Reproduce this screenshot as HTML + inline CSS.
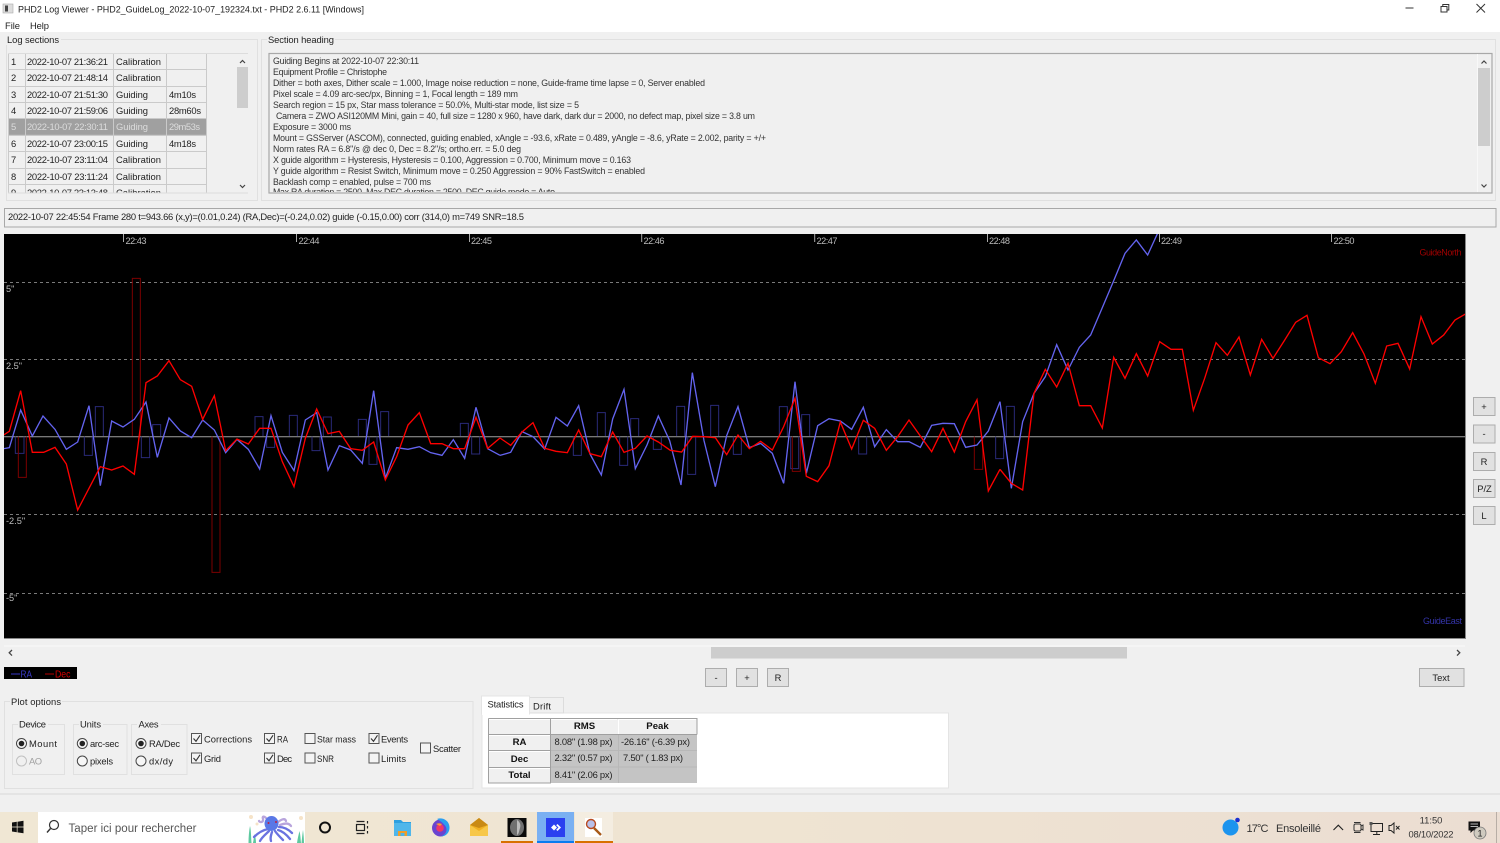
<!DOCTYPE html>
<html><head><meta charset="utf-8"><title>PHD2 Log Viewer</title>
<style>
html,body{margin:0;padding:0;background:#f0f0f0;overflow:hidden}
svg{display:block;filter:blur(.3px)}
text{font-family:"Liberation Sans",sans-serif;font-size:9.4px;fill:#222}
.s{font-size:8.8px;fill:#333}
.g{fill:#bbb;font-size:9.2px}
.w{fill:#dcdcdc}
.b{font-weight:bold;font-size:9.6px;fill:#111}
.btn{fill:#e1e1e1;stroke:#adadad;stroke-width:1}
.gb{fill:none;stroke:#e0e0e0;stroke-width:1}
.cb{fill:#f4f4f4;stroke:#555;stroke-width:1}
.ck{fill:none;stroke:#333;stroke-width:1.1}
.tb{font-size:11px;fill:#333}
</style></head><body>
<svg width="1500" height="843" viewBox="0 0 1500 843" xmlns="http://www.w3.org/2000/svg">
<defs>
<clipPath id="plot"><rect x="4" y="234" width="1461" height="404"/></clipPath>
<clipPath id="list"><rect x="8" y="53" width="228" height="140"/></clipPath>
<clipPath id="head"><rect x="269" y="54" width="1208" height="138"/></clipPath>
<clipPath id="oct"><rect x="247" y="812" width="58" height="31"/></clipPath>
<linearGradient id="tbg" x1="0" x2="1" y1="0" y2="0"><stop offset="0" stop-color="#f0e7d4"/><stop offset=".5" stop-color="#efe4d2"/><stop offset="1" stop-color="#ebddd2"/></linearGradient>
</defs>
<rect width="1500" height="843" fill="#f0f0f0"/>
<rect width="1500" height="32" fill="#fff"/>

<!-- Title bar -->
<rect x="3" y="4" width="10" height="9" fill="#ddd" stroke="#aaa" stroke-width=".6"/><rect x="5" y="5.500" width="3" height="6" fill="#444"/>
<text x="18" y="12.500" textLength="346" lengthAdjust="spacingAndGlyphs">PHD2 Log Viewer - PHD2_GuideLog_2022-10-07_192324.txt - PHD2 2.6.11 [Windows]</text>
<text x="5" y="29" textLength="15">File</text><text x="30" y="29" textLength="19">Help</text>
<path d="M1405.500 8h8M1476.500 4l8.500 8.500M1485 4l-8.500 8.500" stroke="#333" stroke-width="1" fill="none"/>
<path d="M1441 6.500h6v5.500h-6zM1442.800 6.500v-2h6v5.500h-1.800" stroke="#333" stroke-width="1" fill="none"/>

<!-- Log sections -->
<rect class="gb" x="6.500" y="39.500" width="251" height="161"/>
<rect x="6" y="35" width="55" height="10" fill="#f0f0f0"/>
<text x="7" y="43" textLength="52">Log sections</text>
<g clip-path="url(#list)">
<rect x="8" y="53" width="228" height="140" fill="#f0f0f0"/>
<rect x="8" y="118.500" width="198" height="16.400" fill="#a0a0a0"/>
<path d="M8.500 53v140M25.500 53v140M113.500 53v140M166.500 53v140M206.500 53v140M8 53.500h198M8 69.500h198M8 86.500h198M8 102.500h198M8 118.500h198M8 135.500h198M8 151.500h198M8 168.500h198M8 184.500h198" stroke="#cacaca" stroke-width="1" fill="none"/>
<g>
<text x="11" y="65">1</text><text x="27" y="65" textLength="81">2022-10-07 21:36:21</text><text x="116" y="65" textLength="45">Calibration</text>
<text x="11" y="81">2</text><text x="27" y="81" textLength="81">2022-10-07 21:48:14</text><text x="116" y="81" textLength="45">Calibration</text>
<text x="11" y="98">3</text><text x="27" y="98" textLength="81">2022-10-07 21:51:30</text><text x="116" y="98" textLength="32">Guiding</text><text x="169" y="98" textLength="27">4m10s</text>
<text x="11" y="114">4</text><text x="27" y="114" textLength="81">2022-10-07 21:59:06</text><text x="116" y="114" textLength="32">Guiding</text><text x="169" y="114" textLength="32">28m60s</text>
<text class="w" x="11" y="130">5</text><text class="w" x="27" y="130" textLength="81">2022-10-07 22:30:11</text><text class="w" x="116" y="130" textLength="32">Guiding</text><text class="w" x="169" y="130" textLength="31">29m53s</text>
<text x="11" y="147">6</text><text x="27" y="147" textLength="81">2022-10-07 23:00:15</text><text x="116" y="147" textLength="32">Guiding</text><text x="169" y="147" textLength="27">4m18s</text>
<text x="11" y="163">7</text><text x="27" y="163" textLength="81">2022-10-07 23:11:04</text><text x="116" y="163" textLength="45">Calibration</text>
<text x="11" y="180">8</text><text x="27" y="180" textLength="81">2022-10-07 23:11:24</text><text x="116" y="180" textLength="45">Calibration</text>
<text x="11" y="196">9</text><text x="27" y="196" textLength="81">2022-10-07 23:13:48</text><text x="116" y="196" textLength="45">Calibration</text>
</g></g>
<path d="M8 53.500h240M8 193h240" stroke="#dcdcdc" fill="none"/>
<rect x="237" y="67" width="11" height="41" fill="#cdcdcd"/>
<path d="M240 63l2.500-2.500 2.500 2.500M240 185l2.500 2.500 2.500-2.500" stroke="#444" stroke-width="1.200" fill="none"/>

<!-- Section heading -->
<rect class="gb" x="261.500" y="39.500" width="1234" height="161"/>
<rect x="267" y="35" width="68" height="10" fill="#f0f0f0"/>
<text x="268" y="43" textLength="66">Section heading</text>
<rect x="269" y="53.500" width="1223" height="139.500" fill="#f0f0f0" stroke="#a8a8a8" stroke-width="1.200"/>
<g clip-path="url(#head)">
<text class="s" x="273" y="64" textLength="146">Guiding Begins at 2022-10-07 22:30:11</text>
<text class="s" x="273" y="75" textLength="114">Equipment Profile = Christophe</text>
<text class="s" x="273" y="86" textLength="432">Dither = both axes, Dither scale = 1.000, Image noise reduction = none, Guide-frame time lapse = 0, Server enabled</text>
<text class="s" x="273" y="97" textLength="245">Pixel scale = 4.09 arc-sec/px, Binning = 1, Focal length = 189 mm</text>
<text class="s" x="273" y="108" textLength="306">Search region = 15 px, Star mass tolerance = 50.0%, Multi-star mode, list size = 5</text>
<text class="s" x="276" y="119" textLength="479">Camera = ZWO ASI120MM Mini, gain = 40, full size = 1280 x 960, have dark, dark dur = 2000, no defect map, pixel size = 3.8 um</text>
<text class="s" x="273" y="130" textLength="78">Exposure = 3000 ms</text>
<text class="s" x="273" y="141" textLength="493">Mount = GSServer (ASCOM), connected, guiding enabled, xAngle = -93.6, xRate = 0.489, yAngle = -8.6, yRate = 2.002, parity = +/+</text>
<text class="s" x="273" y="152" textLength="248">Norm rates RA = 6.8"/s @ dec 0, Dec = 8.2"/s; ortho.err. = 5.0 deg</text>
<text class="s" x="273" y="163" textLength="358">X guide algorithm = Hysteresis, Hysteresis = 0.100, Aggression = 0.700, Minimum move = 0.163</text>
<text class="s" x="273" y="174" textLength="372">Y guide algorithm = Resist Switch, Minimum move = 0.250 Aggression = 90% FastSwitch = enabled</text>
<text class="s" x="273" y="185" textLength="158">Backlash comp = enabled, pulse = 700 ms</text>
<text class="s" x="273" y="195" textLength="282">Max RA duration = 2500, Max DEC duration = 2500, DEC guide mode = Auto</text>
</g>
<path d="M1477.500 54v138" stroke="#f8f8f8"/>
<rect x="1478" y="68" width="12" height="78" fill="#cdcdcd"/>
<path d="M1481.500 63.500l2.500-2.500 2.500 2.500M1481.500 184.500l2.500 2.500 2.500-2.500" stroke="#444" stroke-width="1.200" fill="none"/>

<!-- Status -->
<rect x="4.500" y="208.500" width="1491.500" height="18.500" fill="#f0f0f0" stroke="#a8a8a8" stroke-width="1"/>
<text x="8" y="220" textLength="516">2022-10-07 22:45:54 Frame 280 t=943.66 (x,y)=(0.01,0.24) (RA,Dec)=(-0.24,0.02) guide (-0.15,0.00) corr (314,0) m=749 SNR=18.5</text>

<!-- Plot -->
<rect x="4" y="234" width="1461" height="404" fill="#000"/>
<path d="M4 638.500h1461.500V234" stroke="#888" fill="none"/>
<g clip-path="url(#plot)">
<path d="M4 282.500h1461M4 359.500h1461M4 514.500h1461M4 593.500h1461" stroke="#7a7a7a" stroke-width="1" stroke-dasharray="3 3" fill="none"/>
<path d="M4 436.700h1461" stroke="#a0a0a0" stroke-width="1" fill="none"/>
<path d="M123.500 234v8M296.500 234v8M469.500 234v8M641.700 234v8M814.700 234v8M987.500 234v8M1159.500 234v8M1331.500 234v8" stroke="#aaa" fill="none"/>
<g transform="translate(0 230) scale(.33333)" fill="none" stroke-width="3">
<g stroke="#2a2a78"><path d="M46 620v50h26v-50M253 620v56h24v-56M286 618v-88h24v88M424 620v63h25v-63M458 618v-34h24v34M765 618v-58h24v58M800 620v32h24v-32M868 618v-62h24v62M936 620v42h24v-42M970 618v-57h24v57M1075 618v-50h24v50M1107 620v83h24v-83M1142 618v-73h24v73M1381 618v-38h24v38M1415 620v52h24v-52"/></g>
<g stroke="#7c0000"><path d="M55 620v122h24v-122M397 618v-473h24v473M636 620v407h24v-407"/></g>
<polyline stroke="#6464f0" stroke-width="4" points="0,658 28,653 62,540 97,618 129,558 165,598 199,658 233,636 267,527 301,767 335,573 369,591 403,568 438,516 472,682 507,564 541,603 575,623 608,570 643,600 677,668 711,628 745,658 779,717 813,557 847,667 882,722 916,570 950,548 984,720 1018,647 1052,660 1087,700 1121,482 1156,745 1190,653 1224,658 1258,650 1292,668 1326,676 1360,629 1394,685 1428,532 1463,656 1500,676"/>
<polyline stroke="#ff0000" stroke-width="4" points="0,622 28,604 62,482 97,667 131,667 165,652 199,702 233,840 267,775 301,710 335,720 369,708 403,733 438,458 472,438 507,392 541,449 575,469 608,568 643,497 677,662 711,627 745,642 779,595 813,595 847,695 882,770 916,625 950,537 984,611 1018,604 1052,656 1087,661 1121,636 1156,750 1190,680 1224,585 1258,548 1292,641 1326,641 1360,656 1394,656 1428,562 1463,655 1500,624"/>
</g>
<g transform="translate(500 230) scale(.33333)" fill="none" stroke-width="3">
<g stroke="#2a2a78"><path d="M220 620v56h24v-56M292 618v-70h24v70M359 620v86h24v-86M392 618v-52h24v52M460 620v38h24v-38M530 618v-89h24v89M563 620v113h24v-113M632 618v-92h24v92M700 620v53h24v-53M838 618v-88h24v88M872 620v96h24v-96M905 618v-64h24v64M1076 620v52h24v-52M1487 620v66h24v-66M1519 618v-89h24v89"/></g>
<g stroke="#7c0000"><path d="M877 620v104h24v-104M1423 620v98h25v-98"/></g>
<polyline stroke="#6464f0" stroke-width="4" points="0,676 32,667 66,605 99,620 134,657 168,562 202,588 236,527 270,672 304,735 338,567 372,478 406,716 441,645 475,558 509,632 543,765 577,428 612,632 646,770 680,617 714,530 748,653 782,640 817,670 851,760 885,455 919,730 953,587 987,566 1021,573 1055,598 1090,532 1124,650 1159,599 1193,635 1227,635 1261,652 1295,586 1329,580 1363,581 1397,652 1431,645 1465,603 1500,515"/>
<polyline stroke="#ff0000" stroke-width="4" points="0,624 32,646 66,606 99,578 134,655 168,664 202,668 236,600 270,671 304,680 338,606 372,667 406,655 441,618 475,636 511,661 545,666 578,619 612,620 646,623 680,674 714,615 748,656 782,634 817,660 851,590 885,505 919,739 953,755 987,707 1021,576 1055,657 1090,571 1124,595 1159,661 1193,620 1227,570 1261,618 1295,665 1329,595 1363,666 1397,575 1431,509 1465,783 1500,718"/>
</g>
<g transform="translate(1000 230) scale(.33333)" fill="none">
<polyline stroke="#6464f0" stroke-width="4" points="0,515 34,775 68,575 102,490 136,440 170,344 204,420 238,352 272,315 306,235 340,155 375,70 409,30 443,75 475,5"/>
<polyline stroke="#ff0000" stroke-width="4" points="0,718 34,760 68,780 102,490 136,418 170,471 204,400 238,527 272,527 307,594 341,382 375,445 409,371 443,438 479,335 513,358 547,358 580,541 614,445 648,338 682,376 717,321 751,435 785,328 819,385 853,332 887,277 921,256 955,383 990,401 1024,365 1058,308 1092,372 1126,460 1160,348 1194,340 1229,417 1263,260 1297,342 1331,315 1365,270 1400,250"/>
</g>
</g>
<text class="g" x="125.500" y="244" textLength="21">22:43</text><text class="g" x="298.500" y="244" textLength="21">22:44</text><text class="g" x="471" y="244" textLength="21">22:45</text><text class="g" x="643.500" y="244" textLength="21">22:46</text><text class="g" x="816.500" y="244" textLength="21">22:47</text><text class="g" x="989" y="244" textLength="21">22:48</text><text class="g" x="1161" y="244" textLength="21">22:49</text><text class="g" x="1333.500" y="244" textLength="21">22:50</text>
<text class="g" x="6" y="292">5"</text><text class="g" x="6" y="369">2.5"</text><text class="g" x="6" y="524">-2.5"</text><text class="g" x="6" y="601">-5"</text>
<text x="1419.500" y="255.500" style="fill:#a00000;font-size:9px" textLength="42">GuideNorth</text>
<text x="1423" y="624" style="fill:#3434a8;font-size:9px" textLength="39">GuideEast</text>

<!-- Side buttons -->
<g class="btn"><rect x="1473.500" y="397.500" width="21.500" height="18"/><rect x="1473.500" y="425" width="21.500" height="18"/><rect x="1473.500" y="452.500" width="21.500" height="18"/><rect x="1473.500" y="479.500" width="21.500" height="18"/><rect x="1473.500" y="506.500" width="21.500" height="18"/></g>
<text x="1484" y="410" text-anchor="middle">+</text><text x="1484" y="437" text-anchor="middle">-</text><text x="1484" y="465" text-anchor="middle">R</text><text x="1484.500" y="492" text-anchor="middle">P/Z</text><text x="1484" y="519" text-anchor="middle">L</text>

<!-- Scrollbar -->
<path d="M4 646h1461" stroke="#fafafa"/>
<rect x="711" y="647" width="416" height="11.500" fill="#cdcdcd"/>
<path d="M12 650l-2.800 2.800 2.800 2.800M1457 650l2.800 2.800-2.800 2.800" stroke="#444" stroke-width="1.300" fill="none"/>

<!-- Legend -->
<rect x="4" y="667" width="73" height="12" fill="#000"/>
<path d="M11 674h9" stroke="#2a2a96" stroke-width="1.300"/><text x="20.500" y="677.500" style="fill:#3a3ac8;font-size:10.500px" textLength="11.500" lengthAdjust="spacingAndGlyphs">RA</text>
<path d="M45 674h9" stroke="#8c0000" stroke-width="1.300"/><text x="55" y="677.500" style="fill:#d80000;font-size:10.500px" textLength="15.500" lengthAdjust="spacingAndGlyphs">Dec</text>

<!-- Bottom buttons -->
<g class="btn"><rect x="705.500" y="668.500" width="21" height="18"/><rect x="736.500" y="668.500" width="21" height="18"/><rect x="767.500" y="668.500" width="21" height="18"/><rect x="1419.500" y="668.500" width="44.500" height="18"/></g>
<text x="716" y="681" text-anchor="middle">-</text><text x="747" y="681" text-anchor="middle">+</text><text x="778" y="681" text-anchor="middle">R</text><text x="1441" y="681" text-anchor="middle">Text</text>

<!-- Plot options -->
<rect class="gb" x="4.500" y="701.500" width="468.500" height="87"/>
<rect x="10" y="697" width="52" height="10" fill="#f0f0f0"/>
<text x="11" y="705" textLength="50">Plot options</text>
<rect class="gb" x="12.500" y="724.500" width="52" height="50"/><rect class="gb" x="73.500" y="724.500" width="53.500" height="50"/><rect class="gb" x="131.500" y="724.500" width="55.500" height="50"/>
<rect x="18" y="720" width="30" height="9" fill="#f0f0f0"/><rect x="79" y="720" width="24" height="9" fill="#f0f0f0"/><rect x="137" y="720" width="24" height="9" fill="#f0f0f0"/>
<text x="19" y="727.500" textLength="27">Device</text><text x="80" y="727.500" textLength="21">Units</text><text x="138.500" y="727.500" textLength="20">Axes</text>
<g fill="#f6f6f6" stroke="#444"><circle cx="21.500" cy="743.500" r="5"/><circle cx="82.300" cy="743.500" r="5"/><circle cx="141" cy="743.500" r="5"/><circle cx="82.300" cy="761" r="5"/><circle cx="141" cy="761" r="5"/></g>
<circle cx="21.500" cy="761" r="5" fill="#f0f0f0" stroke="#c0c0c0"/>
<g fill="#222"><circle cx="21.500" cy="743.500" r="2.800"/><circle cx="82.300" cy="743.500" r="2.800"/><circle cx="141" cy="743.500" r="2.800"/></g>
<text x="29" y="747" textLength="28">Mount</text><text x="29" y="764.500" textLength="13" style="fill:#a0a0a0">AO</text>
<text x="90" y="747" textLength="29">arc-sec</text><text x="90" y="764.500" textLength="23">pixels</text>
<text x="149" y="747" textLength="31">RA/Dec</text><text x="149" y="764.500" textLength="24">dx/dy</text>
<g class="cb"><rect x="191.500" y="733.500" width="10" height="10"/><rect x="191.500" y="753" width="10" height="10"/><rect x="264.500" y="733.500" width="10" height="10"/><rect x="264.500" y="753" width="10" height="10"/><rect x="305" y="733.500" width="10" height="10"/><rect x="305" y="753" width="10" height="10"/><rect x="369" y="733.500" width="10" height="10"/><rect x="369" y="753" width="10" height="10"/><rect x="420.500" y="743" width="10" height="10"/></g>
<path class="ck" d="M193.500 738.500l2.500 2.800 4-6M193.500 758l2.500 2.800 4-6M266.500 738.500l2.500 2.800 4-6M266.500 758l2.500 2.800 4-6M371 738.500l2.500 2.800 4-6"/>
<text x="204" y="742.500" textLength="48">Corrections</text><text x="204" y="762" textLength="17">Grid</text>
<text x="277" y="742.500" textLength="11" lengthAdjust="spacingAndGlyphs">RA</text><text x="277" y="762" textLength="15">Dec</text>
<text x="317" y="742.500" textLength="39" lengthAdjust="spacingAndGlyphs">Star mass</text><text x="317" y="762" textLength="17" lengthAdjust="spacingAndGlyphs">SNR</text>
<text x="381" y="742.500" textLength="27">Events</text><text x="381" y="762" textLength="25">Limits</text>
<text x="433" y="752" textLength="28">Scatter</text>

<path d="M0 794h1500" stroke="#dcdcdc" stroke-width="1.200"/>

<!-- Stats -->
<rect x="482" y="713" width="466.500" height="75" fill="#fff" stroke="#e4e4e4"/>
<rect x="529.500" y="697.500" width="34" height="15.500" fill="#f0f0f0" stroke="#dcdcdc"/>
<rect x="481.500" y="696" width="48" height="18" fill="#fff" stroke="#e4e4e4"/><rect x="482" y="712" width="47" height="3" fill="#fff"/>
<text x="487.500" y="707.500" textLength="36">Statistics</text><text x="533" y="709.500" textLength="18">Drift</text>
<rect x="488.500" y="718.500" width="62" height="64.500" fill="#f0f0f0"/>
<rect x="550.500" y="718.500" width="146.500" height="16" fill="#f0f0f0"/>
<rect x="550.500" y="734" width="146.500" height="49" fill="#c4c4c4"/>
<path d="M488.500 718.500h208.500v16M488.500 718.500v64.500h62v-64.500M488.500 734.500h62M488.500 750.500h62M488.500 767.500h62M550.500 734.500h146.500" stroke="#a0a0a0" fill="none"/>
<path d="M618.500 719v15M489 719.500h61M551 719.500h66M619 719.500h77M489 735.500h61M489 751.500h61M489 768.500h61" stroke="#fff" fill="none"/>
<path d="M618.500 735v48M551 750.500h146M551 767h146" stroke="#b8b8b8" fill="none"/>
<text class="b" x="584.500" y="729" text-anchor="middle">RMS</text><text class="b" x="657.500" y="729" text-anchor="middle">Peak</text>
<text class="b" x="519.500" y="745" text-anchor="middle">RA</text><text class="b" x="519.500" y="762" text-anchor="middle">Dec</text><text class="b" x="519.500" y="778" text-anchor="middle">Total</text>
<text x="554.500" y="745" textLength="58">8.08" (1.98 px)</text><text x="621" y="745" textLength="69">-26.16" (-6.39 px)</text>
<text x="554.500" y="761" textLength="58">2.32" (0.57 px)</text><text x="623" y="761" textLength="60">7.50" ( 1.83 px)</text>
<text x="554.500" y="778" textLength="58">8.41" (2.06 px)</text>

<!-- Taskbar -->
<rect x="0" y="812" width="1500" height="31" fill="url(#tbg)"/>
<path d="M12 822.500l4.800-.7v4.800H12zM17.500 821.700l6-.9v5.800h-6zM12 827.400h4.800v4.800l-4.800-.7zM17.500 827.400h6v5.900l-6-.9z" fill="#111"/>
<rect x="38" y="812" width="267" height="31" fill="#fff"/>
<circle cx="54" cy="825" r="4.500" fill="none" stroke="#333" stroke-width="1.200"/><path d="M50.500 828.500l-3.500 4" stroke="#333" stroke-width="1.400"/>
<text class="tb" x="68.500" y="832" textLength="128" style="fill:#555;font-size:11.500px">Taper ici pour rechercher</text>
<!-- octopus -->
<g clip-path="url(#oct)">
<circle cx="251" cy="817" r="2" fill="#f6e3c8"/><circle cx="301" cy="818" r="2" fill="#f6e3c8"/><circle cx="257" cy="824" r="1.500" fill="#f6e3c8"/>
<path d="M248.500 843c0-6 .5-12 1.500-17 1 4 1 9 1.500 17zM253 843c.5-3 1-6 1.500-9 1 3 1.500 6 1.500 9zM297 843c.5-4 1.500-8 2.500-12 1 4 1 8 1.500 12zM301.500 843c.5-5 1-10 1.500-13 .5 4 1 9 1 13z" fill="#5ec9a0"/>
<g fill="none" stroke-linecap="round" stroke-width="2.300">
<path d="M266 818c-2-2-4-2-3 1 1 3-3 4-4 2M278 822c4-3 7-4 8-1M280 825c5-2 9-2 11 1" stroke="#b8a4dc"/>
<path d="M268 829c-5 1-10 4-14 8M269 831c-3 3-7 6-9 10M272 832c-1 3-2 6-1 9M275 831c2 3 5 6 8 9M278 830c4 1 8 4 12 9M279 827c4 0 9 2 13 6" stroke="#6a72e0"/>
</g>
<ellipse cx="271.500" cy="823.500" rx="7" ry="7.500" fill="#5a78e6"/><circle cx="268.500" cy="823" r="1" fill="#c02040"/><circle cx="276" cy="822" r="1" fill="#c02040"/>
</g>
<circle cx="325" cy="827.500" r="5" fill="none" stroke="#111" stroke-width="2"/>
<path d="M356.500 821.500h8M356.500 833.500h8M367.500 821v2.500M367.500 826v2.500M367.500 831v2.500" stroke="#222" stroke-width="1.200" fill="none"/><rect x="356.500" y="824.500" width="8" height="6" fill="none" stroke="#222" stroke-width="1.200"/>
<!-- Folder -->
<path d="M394 820h7l2 2h8v14h-17z" fill="#2d9fe0"/><rect x="394" y="823" width="17" height="13" fill="#4fb6ea"/><path d="M398 836v-5h9v5h-2.500v-3h-4v3z" fill="#ef9f2b"/>
<!-- Firefox -->
<circle cx="440.500" cy="828" r="8.500" fill="#6a44d0"/><path d="M437 819c5-2 12 1 12.500 8 .3 5-3 9.500-9 9.500 4-1 6-4 6-7 0-4-4-7-9.500-10.500z" fill="#2a9df0"/><circle cx="440" cy="828" r="3.800" fill="#f0356a"/><path d="M436 824c2-1 4-1 6 0l-2 2z" fill="#ff9a30"/>
<!-- Mail -->
<path d="M470 825l9-7 9 7v11h-18z" fill="#f0b020"/><path d="M470 825l9-7 9 7-9 3z" fill="#c98a14"/><path d="M470 836v-11l9 6 9-6v11z" fill="#f7c748"/>
<!-- PHD -->
<rect x="507.500" y="818" width="19" height="19" fill="#0a0a0a"/><ellipse cx="517" cy="827.500" rx="7" ry="8.500" fill="#707070"/><path d="M517 820c3 2 4 5 3 8s-1 6-3 7z" fill="#bbb"/>
<rect x="501" y="841" width="32" height="2" fill="#d87000"/>
<!-- active -->
<rect x="537" y="812" width="37" height="31" fill="#7ab0f2"/><rect x="537" y="841" width="37" height="2" fill="#0a7cf0"/>
<rect x="546" y="818" width="19" height="19" fill="#2a3ff0"/><path d="M551 827.500l3-3 3 3-3 3zM557.500 824l3.500 3.500-3.500 3.500-1.300-1.200 2.300-2.300-2.300-2.300z" fill="#fff"/>
<!-- search log -->
<rect x="575" y="812" width="38" height="31" fill="#f4ede1"/><rect x="575" y="841" width="38" height="2" fill="#d87000"/>
<rect x="585" y="818" width="17" height="19" fill="#fff"/><circle cx="591" cy="824" r="4.500" fill="#b8c0ea" stroke="#b84a20" stroke-width="1.400"/><path d="M594 828l7 7" stroke="#a85a18" stroke-width="2.400"/>
<!-- tray -->
<circle cx="1230.500" cy="827.500" r="8" fill="#1c94ee"/><circle cx="1237.500" cy="820" r="2.300" fill="#1a2fd0"/>
<text class="tb" x="1246.500" y="832" textLength="22">17°C</text>
<text class="tb" x="1276" y="832" textLength="45">Ensoleillé</text>
<path d="M1333.500 830l4.800-4.800 4.800 4.800" stroke="#222" stroke-width="1.100" fill="none"/>
<rect x="1354" y="824" width="7" height="7" rx="1.500" fill="none" stroke="#333"/><path d="M1361 826l2-1v5l-2-1M1354 822.500h6.500M1354 832.500h6.500" stroke="#333" fill="none"/>
<path d="M1371 823.500h11.500v8h-11.500zM1376.800 831.500v3M1373 834.500h7" stroke="#222" fill="none"/><rect x="1369.500" y="822" width="3" height="3" fill="#555"/>
<path d="M1389 825.500h2l3-2.500v10l-3-2.500h-2zM1396 826l3.500 3.500M1399.500 826l-3.500 3.500" stroke="#222" fill="none"/>
<text x="1431" y="823.500" text-anchor="middle" style="font-size:9.400px;fill:#333">11:50</text>
<text x="1431" y="837.500" text-anchor="middle" style="font-size:9.400px;fill:#333" textLength="45">08/10/2022</text>
<path d="M1468.500 821.500h11.500v9h-7l-2.500 2.500v-2.500h-2z" fill="#111"/><path d="M1470.500 824h7.500M1470.500 826.500h7.500" stroke="#eee" stroke-width=".7"/>
<circle cx="1480" cy="833" r="6" fill="#cfcabf" stroke="#777" stroke-width=".8"/><text x="1480" y="836.500" text-anchor="middle" style="font-size:9px;fill:#222">1</text>
<path d="M1496.500 812v31" stroke="#b8aea6" fill="none"/>
</svg>
</body></html>
